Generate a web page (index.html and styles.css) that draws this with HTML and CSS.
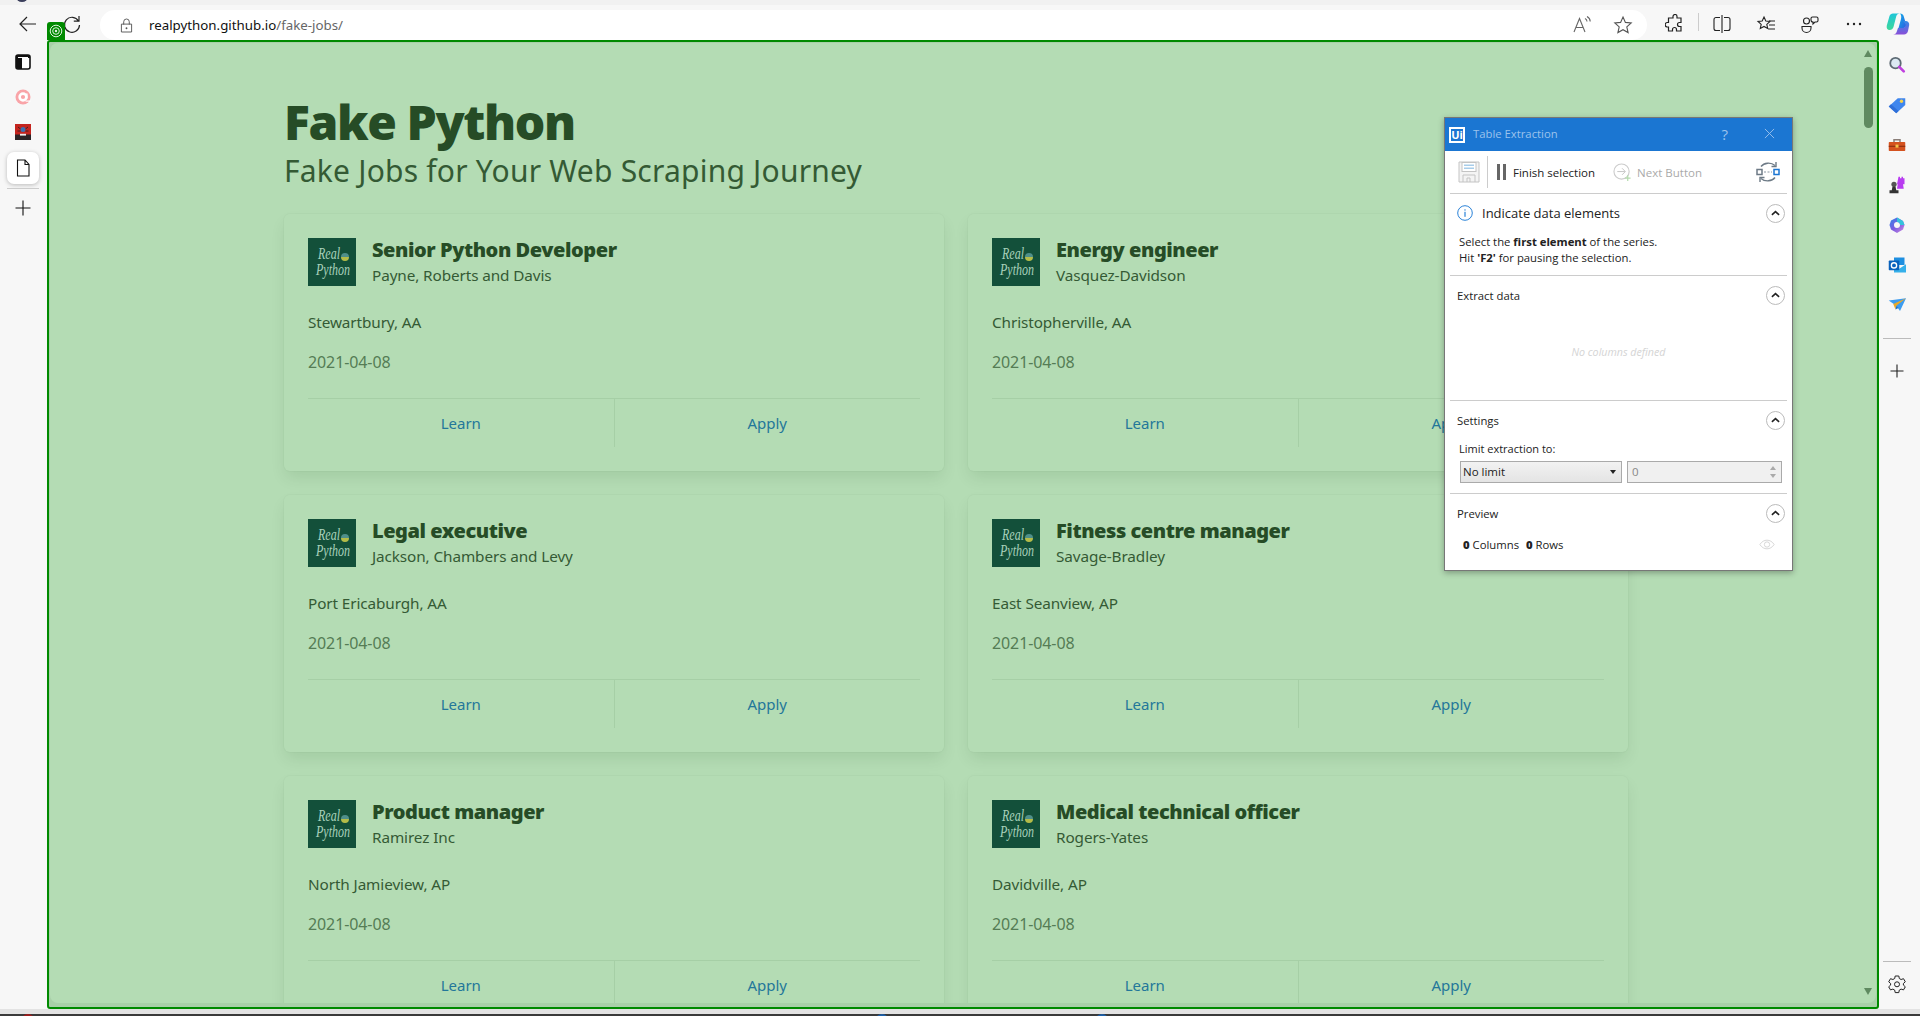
FILE: index.html
```html
<!DOCTYPE html>
<html lang="en">
<head>
  <meta charset="UTF-8">
  <title>Fake Python</title>
  <link rel="stylesheet" href="styles.css">
</head>
<body>
  <div class="top-strip"><span class="top-flag"></span></div>

  <header class="toolbar">
    <span class="tool-slot">
      <svg class="icon" viewBox="0 0 20 20"><path d="M18 10H2M9 3l-7 7 7 7" fill="none" stroke="#222" stroke-width="1.2"/></svg>
    </span>
    <span class="tool-slot">
      <svg class="icon" viewBox="0 0 20 20"><path d="M16.5 7A7.5 7.5 0 1 0 17.5 11M17 2v5.2h-5.2" fill="none" stroke="#222" stroke-width="1.2"/></svg>
    </span>
    <div class="url-bar">
      <svg class="lock" viewBox="0 0 14 16"><path d="M4 7V4a3 3 0 0 1 6 0v3M1.5 6.500h11v8.500h-11z" fill="none" stroke="#555" stroke-width="1"/><circle cx="7" cy="11" r="1" fill="#555"/></svg>
      <span class="url-text">realpython.github.io<span class="url-path">/fake-jobs/</span></span>
      <span class="url-tail">
        <svg class="icon" viewBox="0 0 20 20"><path d="M2 17L7.500 3.500 13 17M4 12.500h7M13 3.500c1.500.8 2 1.700 2 3M15 1.500c2.300 1.200 3.200 3 3.200 5" fill="none" stroke="#666" stroke-width="1.100"/></svg>
        <svg class="icon" viewBox="0 0 20 20"><path d="M10 2l2.400 5.400 5.800.6-4.400 3.900 1.300 5.700L10 14.700l-5.100 2.900 1.300-5.700L1.800 8l5.800-.6z" fill="none" stroke="#555" stroke-width="1.100"/></svg>
      </span>
    </div>
    <div class="toolbar-right">
      <span class="tool-slot">
        <svg class="icon" viewBox="0 0 20 20"><path d="M8 2.500a2 2 0 0 1 4 0V4h4v4.500h-1.500a2 2 0 0 0 0 4H16V17h-4.500v-1.500a2 2 0 0 0-4 0V17H3.500v-4H2a2.300 2.300 0 0 1 0-4.500h1.500V4H8z" fill="none" stroke="#222" stroke-width="1.200"/></svg>
      </span>
      <span class="tool-sep"></span>
      <span class="tool-slot">
        <svg class="icon" viewBox="0 0 20 20"><path d="M10 1v18M8 3.500H4a2 2 0 0 0-2 2v9a2 2 0 0 0 2 2h4M12 3.500h4a2 2 0 0 1 2 2v9a2 2 0 0 1-2 2h-4" fill="none" stroke="#222" stroke-width="1.100"/></svg>
      </span>
      <span class="tool-slot">
        <svg class="icon" viewBox="0 0 20 20"><path d="M8 3l1.800 4 4.200.5-3.200 2.900.9 4.100L8 12.400l-3.700 2.100.9-4.100L2 7.500 6.200 7zM13 7h6M13 11h6M12 15h7" fill="none" stroke="#222" stroke-width="1.100"/></svg>
      </span>
      <span class="tool-slot">
        <svg class="icon" viewBox="0 0 20 20"><circle cx="6.500" cy="7" r="3" fill="none" stroke="#222" stroke-width="1.100"/><path d="M11 4.500a1.500 1.500 0 0 1 1.500-1.500h4A1.500 1.500 0 0 1 18 4.500v2A1.500 1.500 0 0 1 16.500 8H15l-2 2V8a2 2 0 0 1-2-2zM2 12.500h9v1.500a4.500 4.500 0 0 1-9 0z" fill="none" stroke="#222" stroke-width="1.100"/></svg>
      </span>
      <span class="tool-slot">
        <svg class="icon" viewBox="0 0 20 20"><circle cx="4" cy="10" r="1.200" fill="#222"/><circle cx="10" cy="10" r="1.200" fill="#222"/><circle cx="16" cy="10" r="1.200" fill="#222"/></svg>
      </span>
      <span class="tool-slot copilot-slot">
        <svg class="icon-lg" viewBox="0 0 24 24">
          <defs>
            <linearGradient id="cp1" x1="0" y1="0" x2="0" y2="1"><stop offset="0" stop-color="#1fc6d8"/><stop offset="1" stop-color="#3ed89a"/></linearGradient>
            <linearGradient id="cp2" x1="0" y1="0" x2="1" y2="1"><stop offset="0" stop-color="#12b0e8"/><stop offset="1" stop-color="#2a5fe0"/></linearGradient>
            <linearGradient id="cp3" x1="0" y1="0" x2="0" y2="1"><stop offset="0" stop-color="#2f8ae8"/><stop offset="1" stop-color="#8a4fd8"/></linearGradient>
          </defs>
          <path d="M7 1.500h7c-2 0-3.300 1.200-3.800 3L7.500 15c-.6 2-2 3-3.800 3C1.300 18 .2 16 .8 13.500L3.500 4C4 2.400 5.300 1.500 7 1.500z" fill="url(#cp1)"/>
          <path d="M14 1.500c2 0 3.200 1 3.700 2.800L20 12c.6 2.500-.5 4-2.500 4h-5l2.500-9c.4-2 .4-4.200-1-5.500z" fill="url(#cp2)"/>
          <path d="M17 9h2.500c2.500 0 4 1.800 3.700 4l-1.200 6c-.5 2.200-2 3.500-4 3.500H7c2 0 3.300-1 3.800-3L12 16h5c2 0 3-1.800 2.500-4z" fill="url(#cp3)"/>
        </svg>
      </span>
    </div>
  </header>

  <div class="middle">
    <nav class="side-left">
      <span class="side-icon">
        <svg class="icon" viewBox="0 0 20 20"><rect x="3" y="3" width="14" height="14" rx="2" fill="#fff" stroke="#111" stroke-width="1.600"/><path d="M3 5a2 2 0 0 1 2-2h10a2 2 0 0 1 2 2v1H9v11H5a2 2 0 0 1-2-2z" fill="#111"/><rect x="5" y="5" width="10" height="1" fill="#fff"/></svg>
      </span>
      <span class="side-icon">
        <svg class="icon" viewBox="0 0 20 20"><circle cx="10" cy="10" r="7.500" fill="#f9a4a8"/><circle cx="10" cy="10" r="3.400" fill="none" stroke="#fff" stroke-width="2.600"/><path d="M13.800 6.500v5" stroke="#fff" stroke-width="1.600"/><rect x="12.500" y="13.500" width="5" height="1.200" fill="#fff"/></svg>
      </span>
      <span class="side-icon">
        <svg class="icon-red" viewBox="0 0 16 16"><rect width="16" height="16" fill="#c4241e"/><rect y="10.500" width="16" height="5.500" fill="#2c2426"/><circle cx="8" cy="5.500" r="2.500" fill="#3d6fb0"/><path d="M3 3l2.500 2M13 3l-2.500 2M2.500 7h3M13.500 7h-3" stroke="#222" stroke-width=".8"/><rect x="5" y="9.800" width="6" height="1.800" fill="#eee"/></svg>
      </span>
      <span class="side-icon side-active">
        <svg class="icon" viewBox="0 0 20 20"><path d="M4.500 2h7.500l4 4.500V18h-11.500zM12 2v4.500h4" fill="#fff" stroke="#111" stroke-width="1.100"/></svg>
      </span>
      <span class="side-sep"></span>
      <span class="side-icon">
        <svg class="icon" viewBox="0 0 20 20"><path d="M10 2.500v15M2.500 10h15" stroke="#111" stroke-width="1.100"/></svg>
      </span>
    </nav>

    <main class="frame">
      <span class="frame-tab">
        <svg viewBox="0 0 14 14"><circle cx="7" cy="7" r="5.800" fill="none" stroke="#dff2df" stroke-width="1"/><circle cx="7" cy="7" r="3.300" fill="none" stroke="#dff2df" stroke-width="1"/><circle cx="7" cy="7" r="1.200" fill="#dff2df"/></svg>
      </span>

      <div class="page">
        <div class="page-scroll">
          <h1 class="title">Fake Python</h1>
          <p class="subtitle">Fake Jobs for Your Web Scraping Journey</p>

          <div class="jobs">
            <article class="card">
              <div class="media">
                <div class="logo"><span class="logo-real">Real</span><span class="logo-python">Python</span></div>
                <div>
                  <h2 class="job-title">Senior Python Developer</h2>
                  <h3 class="company">Payne, Roberts and Davis</h3>
                </div>
              </div>
              <p class="location">Stewartbury, AA</p>
              <p class="date">2021-04-08</p>
              <footer class="card-footer"><a class="card-link">Learn</a><a class="card-link">Apply</a></footer>
            </article>
            <article class="card">
              <div class="media">
                <div class="logo"><span class="logo-real">Real</span><span class="logo-python">Python</span></div>
                <div>
                  <h2 class="job-title">Energy engineer</h2>
                  <h3 class="company">Vasquez-Davidson</h3>
                </div>
              </div>
              <p class="location">Christopherville, AA</p>
              <p class="date">2021-04-08</p>
              <footer class="card-footer"><a class="card-link">Learn</a><a class="card-link">Apply</a></footer>
            </article>
            <article class="card">
              <div class="media">
                <div class="logo"><span class="logo-real">Real</span><span class="logo-python">Python</span></div>
                <div>
                  <h2 class="job-title">Legal executive</h2>
                  <h3 class="company">Jackson, Chambers and Levy</h3>
                </div>
              </div>
              <p class="location">Port Ericaburgh, AA</p>
              <p class="date">2021-04-08</p>
              <footer class="card-footer"><a class="card-link">Learn</a><a class="card-link">Apply</a></footer>
            </article>
            <article class="card">
              <div class="media">
                <div class="logo"><span class="logo-real">Real</span><span class="logo-python">Python</span></div>
                <div>
                  <h2 class="job-title">Fitness centre manager</h2>
                  <h3 class="company">Savage-Bradley</h3>
                </div>
              </div>
              <p class="location">East Seanview, AP</p>
              <p class="date">2021-04-08</p>
              <footer class="card-footer"><a class="card-link">Learn</a><a class="card-link">Apply</a></footer>
            </article>
            <article class="card">
              <div class="media">
                <div class="logo"><span class="logo-real">Real</span><span class="logo-python">Python</span></div>
                <div>
                  <h2 class="job-title">Product manager</h2>
                  <h3 class="company">Ramirez Inc</h3>
                </div>
              </div>
              <p class="location">North Jamieview, AP</p>
              <p class="date">2021-04-08</p>
              <footer class="card-footer"><a class="card-link">Learn</a><a class="card-link">Apply</a></footer>
            </article>
            <article class="card">
              <div class="media">
                <div class="logo"><span class="logo-real">Real</span><span class="logo-python">Python</span></div>
                <div>
                  <h2 class="job-title">Medical technical officer</h2>
                  <h3 class="company">Rogers-Yates</h3>
                </div>
              </div>
              <p class="location">Davidville, AP</p>
              <p class="date">2021-04-08</p>
              <footer class="card-footer"><a class="card-link">Learn</a><a class="card-link">Apply</a></footer>
            </article>
          </div>
        </div>

        <div class="scrollbar">
          <span class="arrow-up"></span>
          <span class="thumb"></span>
          <span class="arrow-down"></span>
        </div>
      </div>

      <!-- floating extraction window -->
      <section class="tx-window">
        <div class="tx-title">
          <span class="ui-logo">Ui</span>
          <span class="tx-name">Table Extraction</span>
          <span class="tx-help">?</span>
          <svg class="tx-close" viewBox="0 0 12 12"><path d="M1 1l10 10M11 1L1 11" stroke="#9cc3ec" stroke-width="1"/></svg>
        </div>

        <div class="tx-tools">
          <svg class="save-icon" viewBox="0 0 22 22"><path d="M1 1h20v20H1z" fill="#f4f4f4" stroke="#c4c4c4"/><rect x="4" y="1.500" width="14" height="9" fill="#fff" stroke="#c4c4c4"/><rect x="6" y="3.500" width="10" height="1.500" fill="#a8cdea"/><rect x="6" y="6.500" width="10" height="1.500" fill="#a8cdea"/><path d="M5 21v-7h12v7M9 21v-4h3v4" fill="none" stroke="#c4c4c4"/></svg>
          <span class="tools-sep"></span>
          <span class="pause-bars"><i></i><i></i></span>
          <span class="finish-label">Finish selection</span>
          <svg class="next-icon" viewBox="0 0 20 20"><circle cx="9" cy="9" r="8" fill="none" stroke="#ccc" stroke-width="1.200"/><path d="M4.500 9h8M9.500 5.500l3.500 3.500-3.500 3.500" fill="none" stroke="#c4c4c4"/><path d="M15.500 13v6M12.500 16h6" stroke="#b5dcae" stroke-width="1.300"/></svg>
          <span class="next-label">Next Button</span>
          <svg class="swap-icon" viewBox="0 0 24 22"><path d="M5 5.500C8 1.500 15 1 19 4.500M19 16.500C16 20.500 9 21 5 17.500" fill="none" stroke="#6d7a86" stroke-width="1.400"/><path d="M20 1v4.500h-4.500M4 21v-4.500h4.500" fill="none" stroke="#6d7a86" stroke-width="1.400"/><rect x="1" y="8.500" width="5" height="5" fill="#fff" stroke="#6d7a86" stroke-width="1.500"/><rect x="18" y="8.500" width="5" height="5" fill="#fff" stroke="#1b76d2" stroke-width="1.500"/><path d="M8 11h8" stroke="#8a96a2" stroke-dasharray="2 1.500"/></svg>
        </div>

        <div class="tx-section">
          <div class="tx-head">
            <svg class="info-icon" viewBox="0 0 16 16"><circle cx="8" cy="8" r="7.300" fill="none" stroke="#2b83d8" stroke-width="1"/><rect x="7.400" y="6.800" width="1.200" height="5" fill="#2b83d8"/><rect x="7.400" y="4.300" width="1.200" height="1.300" fill="#2b83d8"/></svg>
            <span class="head-lg">Indicate data elements</span>
            <span class="chev"><svg viewBox="0 0 10 6"><path d="M1 5l4-3.500L9 5" fill="none" stroke="#222" stroke-width="1.800"/></svg></span>
          </div>
          <p class="tx-help-text">Select the <b>first element</b> of the series.<br>Hit <b>'F2'</b> for pausing the selection.</p>
        </div>

        <div class="tx-section">
          <div class="tx-head">
            <span class="head-sm">Extract data</span>
            <span class="chev"><svg viewBox="0 0 10 6"><path d="M1 5l4-3.500L9 5" fill="none" stroke="#222" stroke-width="1.800"/></svg></span>
          </div>
          <p class="tx-empty">No columns defined</p>
        </div>

        <div class="tx-section">
          <div class="tx-head">
            <span class="head-sm">Settings</span>
            <span class="chev"><svg viewBox="0 0 10 6"><path d="M1 5l4-3.500L9 5" fill="none" stroke="#222" stroke-width="1.800"/></svg></span>
          </div>
          <p class="limit-label">Limit extraction to:</p>
          <div class="limit-row">
            <div class="combo">No limit<span class="combo-arrow"></span></div>
            <div class="spin">0<span class="spin-arrows"><i class="spin-up"></i><i class="spin-down"></i></span></div>
          </div>
        </div>

        <div class="tx-section tx-last">
          <div class="tx-head">
            <span class="head-sm">Preview</span>
            <span class="chev"><svg viewBox="0 0 10 6"><path d="M1 5l4-3.500L9 5" fill="none" stroke="#222" stroke-width="1.800"/></svg></span>
          </div>
          <div class="preview-row">
            <span><b>0</b> Columns</span>
            <span class="rows"><b>0</b> Rows</span>
            <svg class="eye" viewBox="0 0 18 12"><path d="M1 6c4-6.500 12-6.500 16 0-4 6.500-12 6.500-16 0z" fill="none" stroke="#d2d2d2"/><circle cx="9" cy="6" r="3" fill="none" stroke="#d2d2d2"/></svg>
          </div>
        </div>
      </section>
    </main>

    <aside class="side-right">
      <span class="side-icon">
        <svg class="icon-sm" viewBox="0 0 24 24"><circle cx="10" cy="9.500" r="7" fill="#dbe9f2" stroke="#5d6a74" stroke-width="2.400"/><path d="M15 14.500l6 6" stroke="#c040e0" stroke-width="3.600" stroke-linecap="round"/></svg>
      </span>
      <span class="side-icon">
        <svg class="icon-sm" viewBox="0 0 24 24"><path d="M1 14L13 3h10v9L11 23z" fill="#3f86ee"/><path d="M1 14l10 9 3-3-10-9z" fill="#2f6fd8"/><circle cx="18" cy="7" r="2.200" fill="#f7d24a"/></svg>
      </span>
      <span class="side-icon">
        <svg class="icon-sm" viewBox="0 0 24 24"><path d="M8 8V5h8v3" fill="none" stroke="#8a7e78" stroke-width="2"/><rect x="1" y="8" width="22" height="12" rx="1" fill="#d4521f"/><rect x="1" y="13" width="22" height="1.500" fill="#8c2f10"/><rect x="10" y="11.500" width="4" height="4" fill="#f3c24a"/></svg>
      </span>
      <span class="side-icon">
        <svg class="icon-sm" viewBox="0 0 24 24"><path d="M14 1h2v2h2V1h2v2h2V1v10h-2l1 6h-9l1-6h-1z" fill="#b83cf0"/><circle cx="8" cy="11" r="3.500" fill="#555"/><path d="M6 14h4l1 5H5zM2 19h12v4H2z" fill="#333"/></svg>
      </span>
      <span class="side-icon">
        <svg class="icon-sm" viewBox="0 0 24 24">
          <defs><linearGradient id="m1" x1="0" y1="0" x2="1" y2="1"><stop offset="0" stop-color="#2c86e8"/><stop offset=".5" stop-color="#7a5be0"/><stop offset="1" stop-color="#d08ae0"/></linearGradient></defs>
          <path d="M12 2l8 4.500 2 5.500-2 6-8 4.500L4 18l-2-6 2-6z" fill="url(#m1)"/><circle cx="12" cy="12" r="4" fill="#f7f7f7"/><path d="M12 2l8 4.500 2 5.500-6 0a4 4 0 0 0-4-4z" fill="#35c3dc"/>
        </svg>
      </span>
      <span class="side-icon">
        <svg class="icon-sm" viewBox="0 0 24 24"><path d="M8 2h14v10H8z" fill="#1e8fe0"/><path d="M8 12l7 5 9-6v11H8z" fill="#35b0ea"/><rect x="1" y="6" width="14" height="13" rx="1" fill="#0a62bc"/><circle cx="8" cy="12.500" r="3.500" fill="none" stroke="#fff" stroke-width="1.800"/></svg>
      </span>
      <span class="side-icon">
        <svg class="icon-sm" viewBox="0 0 24 24"><path d="M1 6l23-3-8 17-5-7z" fill="#3c9cf0"/><path d="M7 10.500L24 3 11 13l-1 5z" fill="#e9a928"/><path d="M11 13l-1 5 4-2z" fill="#1f70c8"/></svg>
      </span>
      <span class="side-sep-r"></span>
      <span class="side-icon">
        <svg class="icon" viewBox="0 0 20 20"><path d="M10 3.500v13M3.500 10h13" stroke="#222" stroke-width="1.100"/></svg>
      </span>
      <span class="side-fill"></span>
      <span class="side-sep-r"></span>
      <span class="side-icon gear">
        <svg class="icon" viewBox="0 0 20 20"><path d="M8.200 2h3.600l.5 2.500 1.800 1 2.400-.8 1.800 3.100-1.900 1.700v1.600l1.900 1.700-1.800 3.100-2.400-.8-1.800 1-.5 2.500H8.200l-.5-2.500-1.800-1-2.400.8-1.800-3.100 1.900-1.700V9.500L1.700 7.800l1.800-3.100 2.400.8 1.800-1z" fill="none" stroke="#222" stroke-width="1"/><circle cx="10" cy="10.300" r="2.500" fill="none" stroke="#222" stroke-width="1"/></svg>
      </span>
    </aside>
  </div>

  <div class="bottom-gap"></div>
  <div class="taskbar">
    <span class="task-dot task-red"></span>
    <span class="task-dot task-blue"></span>
    <span class="task-dot task-blue2"></span>
  </div>
</body>
</html>
```

FILE: styles.css
```css
* {
  box-sizing: border-box;
}
html, body {
  margin: 0;
  height: 1016px;
  overflow: hidden;
}
body {
  display: flex;
  flex-direction: column;
  background: #f7f7f7;
  font-family: "Noto Sans", "Open Sans", sans-serif;
  color: #222;
}
h1, h2, h3, p {
  margin: 0;
}

/* browser chrome */
.top-strip {
  height: 5px;
  position: relative;
  overflow: hidden;
  background: #f1f1f1;
}
.top-flag {
  position: absolute;
  left: 16px;
  top: -9px;
  width: 12px;
  height: 11px;
  border-radius: 50%;
  background: #3b3f5c;
}
.toolbar {
  height: 35px;
  display: flex;
  padding: 3px 0 0 6px;
}
.tool-slot {
  width: 44px;
  display: flex;
  align-items: center;
  justify-content: center;
}
.icon {
  width: 20px;
  height: 20px;
}
.icon-lg {
  width: 24px;
  height: 24px;
}
.icon-sm {
  width: 18px;
  height: 18px;
}
.icon-red {
  width: 16px;
  height: 16px;
}
.url-bar {
  flex: 1;
  height: 30px;
  margin: 2px 0 0 6px;
  padding: 0 14px 0 20px;
  display: flex;
  align-items: center;
  background: #fff;
  border-radius: 15px;
}
.lock {
  width: 13px;
  height: 15px;
}
.url-text {
  margin-left: 16px;
  font-size: 13.300px;
  color: #111;
}
.url-path {
  color: #666;
}
.url-tail {
  margin-left: auto;
  display: flex;
  gap: 21px;
}
.toolbar-right {
  width: 273px;
  display: flex;
  padding-left: 6px;
}
.tool-sep {
  width: 1px;
  height: 18px;
  margin: 5px 1px 0;
  background: #ccc;
}
.copilot-slot {
  width: 44px;
}

.middle {
  height: 969px;
  display: flex;
}
.side-left {
  width: 47px;
  display: flex;
  flex-direction: column;
  align-items: center;
  padding: 4px 1px 0 0;
}
.side-icon {
  width: 32px;
  height: 35px;
  flex: none;
  display: flex;
  align-items: center;
  justify-content: center;
}
.side-active {
  height: 32px;
  margin-top: 3px;
  background: #fff;
  border-radius: 7px;
  box-shadow: 0 1px 4px rgba(0,0,0,0.25);
}
.side-sep {
  width: 32px;
  height: 1px;
  margin: 4px 0 1px;
  background: #ccc;
}
.side-right {
  flex: 1;
  display: flex;
  flex-direction: column;
  align-items: center;
  padding: 5px 5px 8px 0;
}
.side-right .side-icon {
  height: 40px;
}
.side-sep-r {
  width: 28px;
  height: 1px;
  margin: 13px 0 12px;
  background: #bbb;
}
.side-fill {
  flex: 1;
}
.side-right .gear {
  height: 34px;
  margin-top: -7px;
}

/* green highlight round the page */
.frame {
  position: relative;
  width: 1832px;
  border: 2px solid #008a00;
  border-radius: 3px;
  background: #a9d0a9;
}
.frame-tab {
  position: absolute;
  left: -2px;
  top: -20px;
  width: 18px;
  height: 18px;
  padding: 2px;
  display: flex;
  background: #008a00;
  border-radius: 3px 3px 0 0;
}
.page {
  margin: 1px 1px 4px;
  height: calc(100% - 5px);
  display: flex;
  overflow: hidden;
  background: #b4dcb4;
  border-radius: 8px;
}
.page-scroll {
  flex: 1;
  padding: 52px 0 0 234px;
  overflow: hidden;
}
.title {
  font-size: 48px;
  line-height: 54px;
  font-weight: 900;
  letter-spacing: -1.400px;
  color: #264c26;
}
.subtitle {
  margin-top: 4px;
  font-size: 30px;
  line-height: 36px;
  letter-spacing: 0.220px;
  color: #345a34;
}
.jobs {
  width: 1344px;
  margin-top: 25px;
  display: grid;
  grid-template-columns: 660px 660px;
  gap: 24px;
}
.card {
  height: 257px;
  padding: 24px;
  border-radius: 6px;
  box-shadow: 0 8px 16px -2px rgba(10,60,10,0.1), 0 0 0 1px rgba(10,60,10,0.02);
}
.media {
  display: flex;
  gap: 16px;
  height: 48px;
  margin-bottom: 24px;
}
.logo {
  position: relative;
  width: 48px;
  height: 48px;
  flex: none;
  background: #13503a;
  font-family: "Liberation Serif", serif;
  font-style: italic;
  font-size: 12px;
  line-height: 15px;
  color: #a8d0ba;
}
.logo::after {
  content: "";
  position: absolute;
  left: 33px;
  top: 15px;
  width: 8px;
  height: 8px;
  border-radius: 50%;
  background: linear-gradient(#4f8f8a 50%, #b4bc48 50%);
}
.logo-real,
.logo-python {
  position: absolute;
  transform: scaleY(1.35);
}
.logo-real {
  left: 10px;
  top: 9px;
}
.logo-python {
  left: 8px;
  top: 25px;
}
.job-title {
  font-size: 20px;
  line-height: 24px;
  font-weight: 900;
  letter-spacing: -0.450px;
  color: #264c26;
}
.company {
  margin-top: 3px;
  font-size: 15.300px;
  line-height: 21px;
  font-weight: 400;
  letter-spacing: -0.100px;
  color: #345a34;
}
.location {
  font-size: 15.300px;
  line-height: 24px;
  letter-spacing: -0.100px;
  color: #345a34;
}
.date {
  margin-top: 16px;
  font-size: 16px;
  line-height: 24px;
  letter-spacing: -0.100px;
  color: #557c55;
}
.card-footer {
  margin-top: 24px;
  display: flex;
  height: 49px;
  border-top: 1px solid #a6cfa6;
}
.card-link {
  flex: 1;
  text-align: center;
  font-size: 15px;
  line-height: 48px;
  color: #23779a;
}
.card-link + .card-link {
  border-left: 1px solid #a6cfa6;
}

.scrollbar {
  width: 16px;
  position: relative;
  flex: none;
}
.arrow-up,
.arrow-down {
  position: absolute;
  left: 4px;
  width: 0;
  height: 0;
  border-left: 4.500px solid transparent;
  border-right: 4.500px solid transparent;
}
.arrow-up {
  top: 7px;
  border-bottom: 7px solid #5f8a60;
}
.arrow-down {
  bottom: 8px;
  border-top: 7px solid #5f8a60;
}
.thumb {
  position: absolute;
  top: 24px;
  left: 4px;
  width: 9px;
  height: 61px;
  border-radius: 5px;
  background: #5f8a60;
}

/* table extraction window */
.tx-window {
  position: absolute;
  left: 1395px;
  top: 75px;
  width: 349px;
  height: 454px;
  display: flex;
  flex-direction: column;
  background: #fff;
  border: 1px solid #777;
  box-shadow: 0 2px 6px rgba(0,0,0,0.3);
  font-family: "Open Sans", "Noto Sans", sans-serif;
  font-size: 11.500px;
  color: #222;
}
.tx-title {
  height: 33px;
  flex: none;
  display: flex;
  align-items: center;
  padding: 0 17px 2px 4px;
  background: #1b76d2;
  color: #9cc3ec;
}
.ui-logo {
  width: 16px;
  height: 16px;
  margin-top: 2px;
  border: 1px solid #fff;
  background: #1b76d2;
  color: #fff;
  font-size: 11px;
  font-weight: 700;
  line-height: 14px;
  text-align: center;
  outline: 1px solid #fff;
  outline-offset: -2px;
}
.tx-name {
  margin-left: 8px;
  font-size: 11.300px;
}
.tx-help {
  margin-left: auto;
  margin-right: 36px;
  font-size: 15px;
}
.tx-close {
  width: 11px;
  height: 11px;
}
.tx-tools {
  height: 43px;
  flex: none;
  margin: 0 5px;
  padding: 0 7px 0 8px;
  display: flex;
  align-items: center;
  border-bottom: 1px solid #ccc;
}
.save-icon {
  width: 22px;
  height: 22px;
}
.tools-sep {
  width: 1px;
  height: 32px;
  margin: 0 9px 0 7px;
  background: #ccc;
}
.pause-bars {
  display: flex;
  gap: 3px;
}
.pause-bars i {
  width: 3px;
  height: 16px;
  background: #666;
}
.finish-label {
  margin-left: 7px;
}
.next-icon {
  width: 19px;
  height: 19px;
  margin-left: 18px;
}
.next-label {
  margin-left: 5px;
  color: #aaa;
}
.swap-icon {
  width: 24px;
  height: 22px;
  margin-left: auto;
}
.tx-section {
  flex: none;
  margin: 0 5px;
  border-bottom: 1px solid #ccc;
}
.tx-last {
  border-bottom: 0;
}
.tx-head {
  height: 40px;
  display: flex;
  align-items: center;
  padding: 0 2px 2px 7px;
}
.head-lg {
  margin-left: 9px;
  font-size: 13px;
}
.head-sm {
  font-size: 11.300px;
}
.info-icon {
  width: 16px;
  height: 16px;
}
.chev {
  margin-left: auto;
  width: 19px;
  height: 19px;
  display: flex;
  align-items: center;
  justify-content: center;
  border: 1px solid #bbb;
  border-radius: 50%;
}
.chev svg {
  width: 9px;
  height: 6px;
}
.tx-help-text {
  padding: 0 0 9px 9px;
  font-size: 11.300px;
  line-height: 16px;
}
.tx-empty {
  height: 84px;
  padding-top: 29px;
  text-align: center;
  font-style: italic;
  font-size: 10.700px;
  color: #d4d4d4;
}
.limit-label {
  padding-left: 9px;
  margin-top: 1px;
  line-height: 14px;
  font-size: 11px;
}
.limit-row {
  display: flex;
  gap: 5px;
  margin: 5px 5px 10px 10px;
}
.combo,
.spin {
  position: relative;
  height: 22px;
  padding-left: 2px;
  line-height: 20px;
  border: 1px solid #aaa;
  background: linear-gradient(#f2f2f2, #e4e4e4);
}
.combo {
  width: 162px;
}
.spin {
  flex: 1;
  padding-left: 4px;
  background: #f0f0f0;
  color: #888;
}
.combo-arrow {
  position: absolute;
  right: 5px;
  top: 8px;
  border-left: 3.500px solid transparent;
  border-right: 3.500px solid transparent;
  border-top: 4px solid #222;
}
.spin-arrows i {
  position: absolute;
  right: 5px;
  border-left: 3.500px solid transparent;
  border-right: 3.500px solid transparent;
}
.spin-up {
  top: 4px;
  border-bottom: 4px solid #aaa;
}
.spin-down {
  bottom: 4px;
  border-top: 4px solid #aaa;
}
.preview-row {
  display: flex;
  align-items: center;
  height: 20px;
  padding: 0 12px 0 13px;
  font-size: 11.300px;
}
.preview-row b {
  font-weight: 800;
}
.rows {
  margin-left: 7px;
}
.eye {
  width: 16px;
  height: 11px;
  margin-left: auto;
}

.bottom-gap {
  height: 5px;
  background: #e3e3e3;
}
.taskbar {
  height: 2px;
  position: relative;
  overflow: hidden;
  background: #3a3a3a;
}
.task-dot {
  position: absolute;
  top: 0;
  width: 14px;
  height: 14px;
  border-radius: 50%;
}
.task-red {
  left: 21px;
  background: #9c1c1c;
}
.task-blue {
  left: 875px;
  background: #1d5fa8;
}
.task-blue2 {
  left: 1095px;
  background: #1d5fa8;
}
```
